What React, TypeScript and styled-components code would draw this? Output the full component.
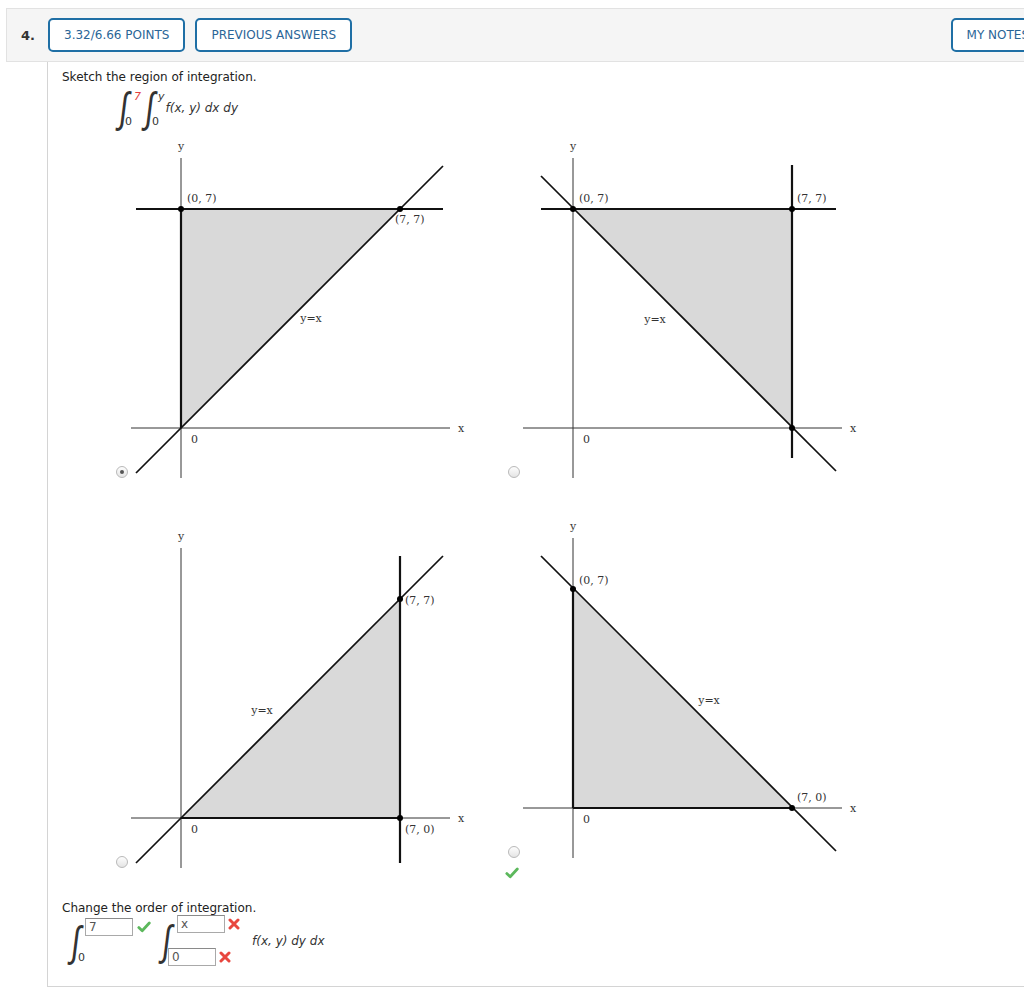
import React from 'react';
import styled, { createGlobalStyle } from 'styled-components';

const GlobalStyle = createGlobalStyle`
  html, body {
    margin: 0;
    padding: 0;
    background: #fff;
    overflow: hidden;
  }
  body {
    font-family: "DejaVu Sans", Verdana, sans-serif;
    font-size: 12px;
    color: #222;
  }
`;

const Page = styled.div`
  padding: 8px 0 0 6px;
  width: 1100px;
`;

const Header = styled.div`
  display: flex;
  align-items: center;
  width: 1060px;
  height: 54px;
  box-sizing: border-box;
  padding: 0 10px 0 14px;
  background: #f5f5f5;
  border: 1px solid #e2e2e2;
`;

const Number = styled.div`
  width: 27px;
  font-weight: bold;
  font-size: 13px;
  color: #333;
`;

const HeaderButton = styled.button<{ $push?: boolean }>`
  height: 34px;
  padding: 0 14px;
  margin-right: 10px;
  margin-left: ${({ $push }) => ($push ? 'auto' : '0')};
  border: 2px solid #1f6fa5;
  border-radius: 5px;
  background: #fff;
  color: #2a6597;
  font-family: "DejaVu Sans", Verdana, sans-serif;
  font-size: 12px;
  text-transform: uppercase;
`;

const Content = styled.div`
  margin-left: 41px;
  border-left: 1px solid #d4d4d4;
  border-bottom: 1px solid #d4d4d4;
  padding: 8px 0 20px 14px;
`;

const Prompt = styled.div`
  line-height: 14px;
`;

const Formula = styled.div<{ $indent: number }>`
  display: flex;
  align-items: stretch;
  height: 40px;
  margin: 4px 0 0 ${({ $indent }) => $indent}px;
`;

const IntegralBox = styled.div<{ $gap?: number; $top?: number }>`
  display: flex;
  align-items: stretch;
  margin-left: ${({ $gap }) => $gap ?? 0}px;
  margin-top: ${({ $top }) => $top ?? 0}px;
`;

const Sign = styled.span<{ $h: number }>`
  display: inline-block;
  width: 14px;
  font-family: "DejaVu Sans", sans-serif;
  font-weight: 200;
  font-size: 42px;
  line-height: ${({ $h }) => $h}px;
  text-align: center;
  color: #333;
  transform: scaleX(0.72) skewX(-10deg);
`;

const Limits = styled.div<{ $pad?: string }>`
  display: flex;
  flex-direction: column;
  justify-content: space-between;
  padding: ${({ $pad }) => $pad ?? '0'};
`;

const Upper = styled.div<{ $red?: boolean; $shift: number }>`
  display: flex;
  align-items: center;
  font-size: 11px;
  font-style: italic;
  line-height: 11px;
  color: ${({ $red }) => ($red ? '#e23d3d' : '#333')};
  margin-left: ${({ $shift }) => $shift}px;
`;

const Lower = styled.div<{ $shift: number }>`
  display: flex;
  align-items: center;
  font-size: 11px;
  line-height: 11px;
  color: #333;
  margin-left: ${({ $shift }) => $shift}px;
`;

const LowerDigit = styled.span`
  padding-bottom: 3px;
`;

const Integrand = styled.span<{ $gap: number }>`
  align-self: center;
  font-style: italic;
  font-size: 12px;
  color: #333;
  margin-left: ${({ $gap }) => $gap}px;
`;

const GraphGrid = styled.div`
  display: grid;
  grid-template-columns: 392px 392px;
  row-gap: 36px;
  align-items: center;
  margin: 7px 0 0 54px;
`;

const Choice = styled.div`
  display: flex;
  flex-direction: column;
`;

const ChoiceRow = styled.div`
  display: flex;
  align-items: flex-end;
`;

const Radio = styled.span<{ $on?: boolean }>`
  position: relative;
  width: 12px;
  height: 12px;
  box-sizing: border-box;
  margin-bottom: 1px;
  border-radius: 50%;
  border: 1px solid #b9b9b9;
  background: linear-gradient(#fdfdfd, #e4e4e4);
  flex-shrink: 0;
  &::after {
    content: '';
    display: ${({ $on }) => ($on ? 'block' : 'none')};
    position: absolute;
    left: 3px;
    top: 3px;
    width: 4px;
    height: 4px;
    border-radius: 50%;
    background: #555;
  }
`;

const MarkRow = styled.div`
  height: 20px;
  display: flex;
  align-items: flex-end;
  margin-left: -3px;
`;

const ChangeBlock = styled.div`
  margin-top: 22px;
`;

const AnswerRow = styled.div`
  display: flex;
  align-items: flex-start;
  height: 51px;
  margin-left: 7px;
`;

const Field = styled.span<{ $w: number }>`
  display: inline-block;
  width: ${({ $w }) => $w}px;
  height: 18px;
  box-sizing: border-box;
  border: 1px solid #a9a9a9;
  border-top-color: #8a8a8a;
  background: #fff;
  padding-left: 3px;
  font-size: 12px;
  line-height: 16px;
  font-style: normal;
  color: #555;
`;

const Mark = styled.span<{ $gap: number }>`
  display: inline-flex;
  margin-left: ${({ $gap }) => $gap}px;
`;

const GraphSvg = styled.svg`
  display: block;
  flex-shrink: 0;
`;

const Label = styled.text`
  font-family: "DejaVu Serif", "Liberation Serif", serif;
  font-size: 11px;
  fill: #333;
`;

const U = 219 / 7;
const X = (u: number) => 53 + u * U;
const Y = (v: number) => 293 - v * U;

type Seg = [number, number, number, number];

interface Spec {
  fill: [number, number][];
  thick: Seg[];
  diag: Seg;
  points: [number, number][];
  labels: { t: string; x: number; y: number; mid?: boolean }[];
}

const up: Seg = [8, 338, 315, 31];
const down: Seg = [21, 41, 316, 336];

const specs: Spec[] = [
  {
    fill: [[0, 0], [0, 7], [7, 7]],
    thick: [[X(0), Y(0), X(0), Y(7)], [8, Y(7), 315, Y(7)]],
    diag: up,
    points: [[0, 7], [7, 7]],
    labels: [
      { t: '(0, 7)', x: 59, y: 67 },
      { t: '(7, 7)', x: 267, y: 88 },
      { t: 'y=x', x: 183, y: 187, mid: true },
    ],
  },
  {
    fill: [[0, 7], [7, 7], [7, 0]],
    thick: [[21, Y(7), 316, Y(7)], [X(7), 30, X(7), 323]],
    diag: down,
    points: [[0, 7], [7, 7], [7, 0]],
    labels: [
      { t: '(0, 7)', x: 59, y: 67 },
      { t: '(7, 7)', x: 277, y: 67 },
      { t: 'y=x', x: 135, y: 188, mid: true },
    ],
  },
  {
    fill: [[0, 0], [7, 7], [7, 0]],
    thick: [[X(7), 31, X(7), 338], [X(0), Y(0), X(7), Y(0)]],
    diag: up,
    points: [[7, 7], [7, 0]],
    labels: [
      { t: '(7, 7)', x: 277, y: 79 },
      { t: '(7, 0)', x: 277, y: 308 },
      { t: 'y=x', x: 134, y: 189, mid: true },
    ],
  },
  {
    fill: [[0, 7], [0, 0], [7, 0]],
    thick: [[X(0), Y(0), X(0), Y(7)], [X(0), Y(0), X(7), Y(0)]],
    diag: down,
    points: [[0, 7], [7, 0]],
    labels: [
      { t: '(0, 7)', x: 59, y: 69 },
      { t: '(7, 0)', x: 277, y: 286 },
      { t: 'y=x', x: 189, y: 189, mid: true },
    ],
  },
];

function Graph({ spec }: { spec: Spec }) {
  return (
    <GraphSvg width={345} height={344} viewBox="0 0 345 344">
      <polygon points={spec.fill.map(([u, v]) => `${X(u)},${Y(v)}`).join(' ')} fill="#d9d9d9" />
      <line x1={X(0)} y1={23} x2={X(0)} y2={343} stroke="#333" strokeWidth={1} />
      <line x1={3} y1={Y(0)} x2={322} y2={Y(0)} stroke="#333" strokeWidth={1} />
      {spec.thick.map(([a, b, c, d], i) => (
        <line key={i} x1={a} y1={b} x2={c} y2={d} stroke="#111" strokeWidth={2.2} />
      ))}
      <line x1={spec.diag[0]} y1={spec.diag[1]} x2={spec.diag[2]} y2={spec.diag[3]} stroke="#111" strokeWidth={1.7} />
      {spec.points.map(([u, v], i) => (
        <circle key={i} cx={X(u)} cy={Y(v)} r={3} fill="#000" />
      ))}
      <Label x={X(0)} y={15} textAnchor="middle">y</Label>
      <Label x={333} y={297} textAnchor="middle">x</Label>
      <Label x={63} y={308}>0</Label>
      {spec.labels.map((l, i) => (
        <Label key={i} x={l.x} y={l.y} textAnchor={l.mid ? 'middle' : 'start'}>
          {l.t}
        </Label>
      ))}
    </GraphSvg>
  );
}

function Check() {
  return (
    <svg width="14" height="12" viewBox="0 0 14 12">
      <path d="M1.8 6.6 L5.2 9.8 L12.3 2" fill="none" stroke="#5cb85c" strokeWidth="2.8" strokeLinecap="round" strokeLinejoin="round" />
    </svg>
  );
}

function Cross() {
  return (
    <svg width="12" height="12" viewBox="0 0 12 12">
      <path d="M2 2 L10 10 M10 2 L2 10" stroke="#e8473f" strokeWidth="3" strokeLinecap="round" />
    </svg>
  );
}

export default function App() {
  return (
    <>
      <GlobalStyle />
      <Page>
        <Header>
          <Number>4.</Number>
          <HeaderButton>3.32/6.66 Points</HeaderButton>
          <HeaderButton>Previous Answers</HeaderButton>
          <HeaderButton $push>My Notes</HeaderButton>
        </Header>
        <Content>
          <Prompt>Sketch the region of integration.</Prompt>
          <Formula $indent={55}>
            <IntegralBox>
              <Sign $h={40}>∫</Sign>
              <Limits $pad="3px 0 1px">
                <Upper $red $shift={3}>7</Upper>
                <Lower $shift={-6}>0</Lower>
              </Limits>
            </IntegralBox>
            <IntegralBox $gap={2}>
              <Sign $h={40}>∫</Sign>
              <Limits $pad="3px 0 1px">
                <Upper $shift={1}>y</Upper>
                <Lower $shift={-5}>0</Lower>
              </Limits>
            </IntegralBox>
            <Integrand $gap={1}>f(x, y) dx dy</Integrand>
          </Formula>

          <GraphGrid>
            {specs.map((s, i) => (
              <Choice key={i}>
                <ChoiceRow>
                  <Radio $on={i === 0} />
                  <Graph spec={s} />
                </ChoiceRow>
                {i === 3 && (
                  <MarkRow>
                    <Check />
                  </MarkRow>
                )}
              </Choice>
            ))}
          </GraphGrid>

          <ChangeBlock>
            <Prompt>Change the order of integration.</Prompt>
            <AnswerRow>
              <IntegralBox $top={3}>
                <Sign $h={48}>∫</Sign>
                <Limits>
                  <Upper $shift={2}>
                    <Field $w={48}>7</Field>
                    <Mark $gap={4}><Check /></Mark>
                  </Upper>
                  <Lower $shift={-5}>
                    <LowerDigit>0</LowerDigit>
                  </Lower>
                </Limits>
              </IntegralBox>
              <IntegralBox $gap={9}>
                <Sign $h={51}>∫</Sign>
                <Limits>
                  <Upper $shift={3}>
                    <Field $w={48}>x</Field>
                    <Mark $gap={3}><Cross /></Mark>
                  </Upper>
                  <Lower $shift={-6}>
                    <Field $w={48}>0</Field>
                    <Mark $gap={3}><Cross /></Mark>
                  </Lower>
                </Limits>
              </IntegralBox>
              <Integrand $gap={12}>f(x, y) dy dx</Integrand>
            </AnswerRow>
          </ChangeBlock>
        </Content>
      </Page>
    </>
  );
}
